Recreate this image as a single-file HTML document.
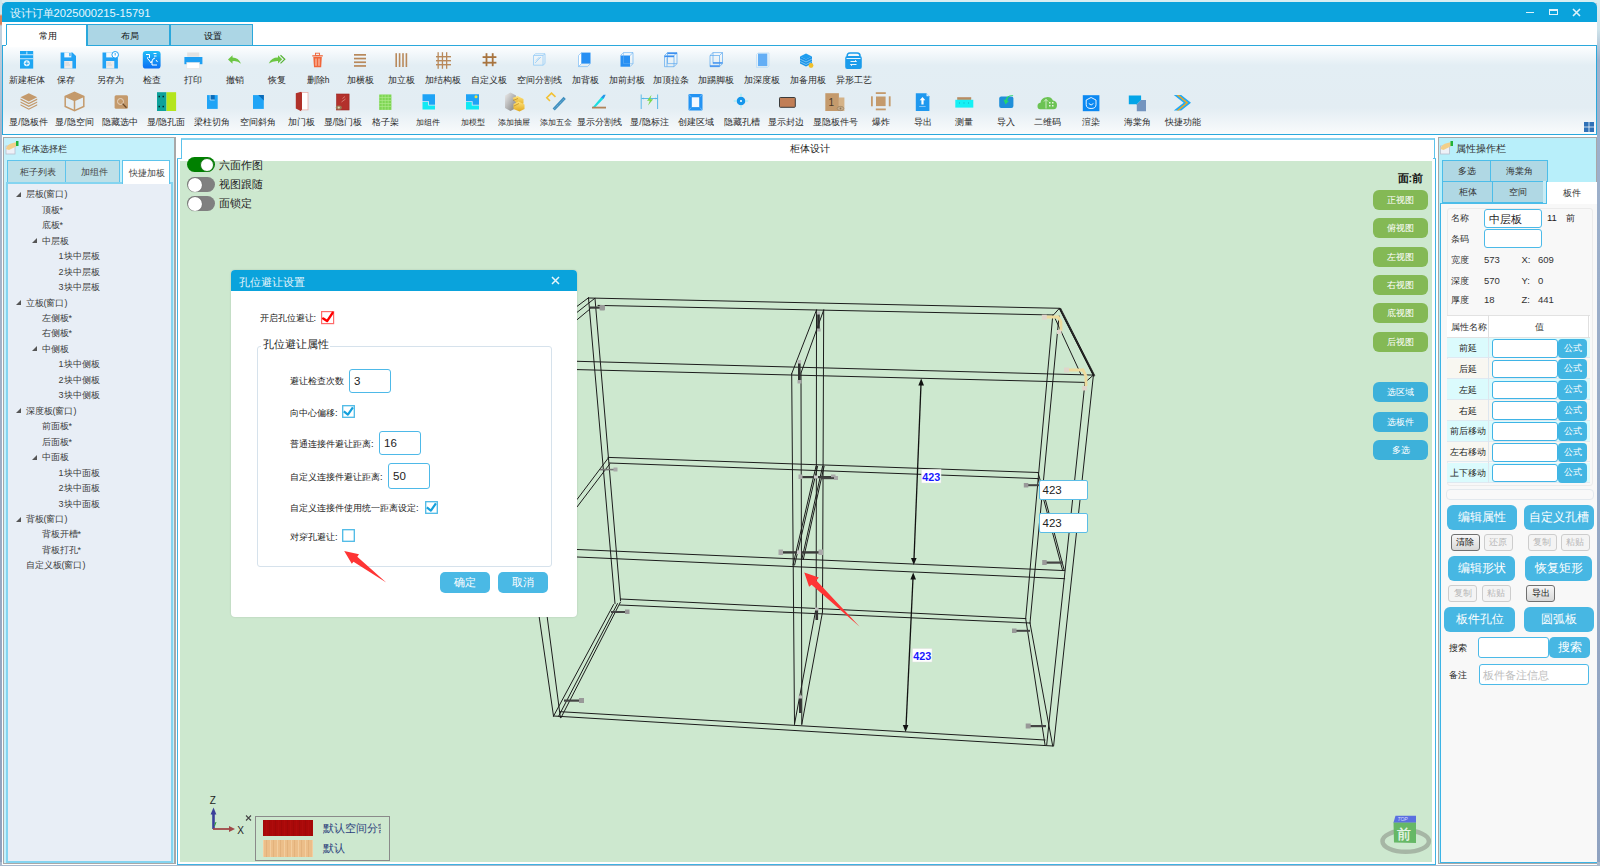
<!DOCTYPE html>
<html><head><meta charset="utf-8">
<style>
*{box-sizing:border-box;margin:0;padding:0}
html,body{width:1600px;height:866px;overflow:hidden;background:#b9c6d6;font-family:"Liberation Sans",sans-serif;color:#222}
.a{position:absolute}
.t{position:absolute;white-space:nowrap;line-height:10px}
.c{text-align:center}
.lb{position:absolute;width:70px;text-align:center;font-size:8.5px;line-height:10px;white-space:nowrap;color:#2a2a2a}
.ic{position:absolute}
.tree{position:absolute;font-size:9px;line-height:10px;color:#3c3c3c;white-space:nowrap}
.tri{position:absolute;width:0;height:0;border-left:5px solid transparent;border-bottom:5px solid #555}
.gbtn{position:absolute;left:1373px;width:55px;height:20px;border-radius:6px;background:#84b955;color:#fff;font-size:8.6px;line-height:20px;text-align:center}
.bbtn{position:absolute;left:1373px;width:55px;height:20px;border-radius:6px;background:#3db1da;color:#fff;font-size:8.6px;line-height:20px;text-align:center}
.pbtn{position:absolute;background:#47b6e2;color:#fff;border-radius:6px;font-size:12px;text-align:center;line-height:25px}
.sbtn{position:absolute;height:16px;border:1px solid #c9c9c9;border-radius:3px;background:#f4f4f4;color:#b5b5b5;font-size:9px;line-height:14px;text-align:center}
.sbtn.en{border-color:#6f6f6f;background:linear-gradient(#fafafa,#d9d9d9);color:#111}
.inp{position:absolute;background:#fff;border:1.5px solid #4bb6e6;border-radius:3px}
.row{position:absolute;left:1447px;width:143px;height:21px;border-bottom:1px solid #d8e6ef}
.rl{position:absolute;left:0;width:41px;height:20px;font-size:9px;line-height:20px;text-align:center;color:#222}
.fx{position:absolute;left:111px;top:0;width:29px;height:20px;background:#42b6e3;border-radius:4px;color:#fff;font-size:9px;line-height:20px;text-align:center}
.ri{position:absolute;left:44px;top:1px;width:66px;height:19px;background:#fff;border:1.5px solid #3fb3e4;border-radius:3px}
</style></head><body>
<!-- desktop strip -->
<div class="a" style="left:0;top:0;width:1600px;height:3px;background:#d8eef2"></div>
<div class="a" style="left:0;top:0;width:2px;height:866px;background:linear-gradient(#cfe6ec 0,#cfe6ec 14px,#d9825a 16px,#d9825a 24px,#c3d3e0 26px,#aab8cc 120px,#8fa0bc 100%)"></div>
<div class="a" style="left:1597px;top:0;width:3px;height:866px;background:linear-gradient(#d9eef2 0,#cfe3ea 30px,#9fb2cc 60px,#8fa2c0 100%)"></div>
<div class="a" style="left:0;top:862px;width:1600px;height:4px;background:#a9b9cc"></div>

<!-- window -->
<div class="a" style="left:2px;top:2px;width:1595px;height:863px;background:#fff;border-radius:5px 5px 0 0"></div>
<div class="a" style="left:2px;top:2px;width:1595px;height:20px;background:#0aa3dc;border-radius:5px 5px 0 0"></div>
<div class="t" style="left:9.5px;top:6.8px;font-size:11px;line-height:12px;color:#e8f6fc">设计订单<span style="font-size:11.2px">2025000215-15791</span></div>
<!-- window controls -->
<div class="a" style="left:1526px;top:12px;width:8px;height:1.3px;background:#dff3fb"></div>
<div class="a" style="left:1549px;top:9px;width:8.5px;height:6px;border:1.2px solid #dff3fb;border-top-width:2px"></div>
<svg class="a" style="left:1572px;top:8px" width="9" height="9"><path d="M1 1L8 8M8 1L1 8" stroke="#dff3fb" stroke-width="1.6"/></svg>

<!-- tabs -->
<div class="a" style="left:6px;top:24px;width:81px;height:23px;background:#fff;border:1px solid #2aa8dc;border-bottom:none"></div>
<div class="t c" style="left:7px;top:31px;width:81px;font-size:9.2px;color:#111">常用</div>
<div class="a" style="left:87px;top:24px;width:83px;height:22px;background:#acd6e5;border:1px solid #2aa8dc"></div>
<div class="t c" style="left:88px;top:31px;width:83px;font-size:9.2px;color:#111">布局</div>
<div class="a" style="left:170px;top:24px;width:83px;height:22px;background:#acd6e5;border:1px solid #2aa8dc"></div>
<div class="t c" style="left:171px;top:31px;width:83px;font-size:9.2px;color:#111">设置</div>

<!-- ribbon -->
<div class="a" style="left:2px;top:45px;width:1595px;height:90px;border:1px solid #2aa8dc;background:linear-gradient(#fdfeff 0%,#e3eef4 22%,#e3edf3 70%,#f9fbfc 100%)"></div>
<div class="a" style="left:6px;top:45px;width:80px;height:2px;background:#fff"></div>
<div class="lb" style="left:-8.5px;top:75px">新建柜体</div>
<div class="lb" style="left:31px;top:75px">保存</div>
<div class="lb" style="left:75px;top:75px">另存为</div>
<div class="lb" style="left:116.5px;top:75px">检查</div>
<div class="lb" style="left:158px;top:75px">打印</div>
<div class="lb" style="left:199.6px;top:75px">撤销</div>
<div class="lb" style="left:241.5px;top:75px">恢复</div>
<div class="lb" style="left:283px;top:75px">删除h</div>
<div class="lb" style="left:325px;top:75px">加横板</div>
<div class="lb" style="left:366.5px;top:75px">加立板</div>
<div class="lb" style="left:408px;top:75px">加结构板</div>
<div class="lb" style="left:454px;top:75px">自定义板</div>
<div class="lb" style="left:504px;top:75px">空间分割线</div>
<div class="lb" style="left:550px;top:75px">加背板</div>
<div class="lb" style="left:591.5px;top:75px">加前封板</div>
<div class="lb" style="left:635.5px;top:75px">加顶拉条</div>
<div class="lb" style="left:681px;top:75px">加踢脚板</div>
<div class="lb" style="left:727px;top:75px">加深度板</div>
<div class="lb" style="left:772.5px;top:75px">加备用板</div>
<div class="lb" style="left:818.5px;top:75px">异形工艺</div>
<div class="lb" style="left:-6.5px;top:117px">显/隐板件</div>
<div class="lb" style="left:39.5px;top:117px">显/隐空间</div>
<div class="lb" style="left:85px;top:117px">隐藏选中</div>
<div class="lb" style="left:131px;top:117px">显/隐孔面</div>
<div class="lb" style="left:176.75px;top:117px">梁柱切角</div>
<div class="lb" style="left:222.5px;top:117px">空间斜角</div>
<div class="lb" style="left:266.5px;top:117px">加门板</div>
<div class="lb" style="left:308px;top:117px">显/隐门板</div>
<div class="lb" style="left:350px;top:117px">格子架</div>
<div class="lb" style="left:393px;top:117.5px;font-size:7.6px">加组件</div>
<div class="lb" style="left:437.5px;top:117.5px;font-size:7.6px">加模型</div>
<div class="lb" style="left:479px;top:117.5px;font-size:7.6px">添加抽屉</div>
<div class="lb" style="left:520.5px;top:117.5px;font-size:7.6px">添加五金</div>
<div class="lb" style="left:564.5px;top:117px">显示分割线</div>
<div class="lb" style="left:614.5px;top:117px">显/隐标注</div>
<div class="lb" style="left:660.5px;top:117px">创建区域</div>
<div class="lb" style="left:706.5px;top:117px">隐藏孔槽</div>
<div class="lb" style="left:751px;top:117px">显示封边</div>
<div class="lb" style="left:800px;top:117px">显隐板件号</div>
<div class="lb" style="left:846px;top:117px">爆炸</div>
<div class="lb" style="left:887.5px;top:117px">导出</div>
<div class="lb" style="left:929px;top:117px">测量</div>
<div class="lb" style="left:971px;top:117px">导入</div>
<div class="lb" style="left:1012.5px;top:117px">二维码</div>
<div class="lb" style="left:1056px;top:117px">渲染</div>
<div class="lb" style="left:1102px;top:117px">海棠角</div>
<div class="lb" style="left:1148px;top:117px">快捷功能</div>
<svg class="a" style="left:0;top:45px" width="1600" height="90" viewBox="0 45 1600 90">
<defs>
<linearGradient id="gchk" x1="0" y1="0" x2="0" y2="1"><stop offset="0" stop-color="#22bdf7"/><stop offset="1" stop-color="#0a6ef4"/></linearGradient>
<linearGradient id="gcab" x1="0" y1="0" x2="1" y2="1"><stop offset="0" stop-color="#ededed"/><stop offset="1" stop-color="#7d7d7d"/></linearGradient>
<linearGradient id="gdr" x1="0" y1="0" x2="0" y2="1"><stop offset="0" stop-color="#ffe37a"/><stop offset="1" stop-color="#e0a81f"/></linearGradient>
</defs>
<!-- row1 -->
<rect x="20" y="51" width="13.2" height="17.6" fill="#1ea6f2"/>
<rect x="20" y="54.3" width="13.2" height="0.9" fill="#d9f1fd"/><rect x="20" y="58.3" width="13.2" height="0.9" fill="#d9f1fd"/>
<rect x="26.4" y="51.5" width="0.9" height="3" fill="#d9f1fd"/>
<circle cx="26.8" cy="63.3" r="3" fill="#e8f6fe"/><path d="M26.8 61.3V65.3M24.8 63.3H28.8" stroke="#1ea6f2" stroke-width="0.9"/>

<path d="M60.6 52.4H72.4L76 56V68.6H60.6Z" fill="#22a3f5"/><rect x="64.3" y="52.4" width="7" height="5" fill="#f3f8fb"/><rect x="69.3" y="53" width="1.3" height="3.2" fill="#22a3f5"/><rect x="64.2" y="61" width="8.2" height="7.6" fill="#ececec"/><path d="M65.3 63H69M65.3 65H70" stroke="#c6c6c6" stroke-width="0.6"/>
<path d="M102.5 52.4H114.3L117.9 56V68.6H102.5Z" fill="#22a3f5"/><rect x="106.2" y="52.4" width="7" height="5" fill="#f3f8fb"/><rect x="106.1" y="61" width="8.2" height="7.6" fill="#ececec"/><path d="M107.3 63H111M107.3 65H112" stroke="#c6c6c6" stroke-width="0.6"/>
<circle cx="115.2" cy="54.8" r="3.3" fill="#fff" stroke="#22a3f5" stroke-width="1"/><path d="M115.2 53V55.5" stroke="#22a3f5" stroke-width="0.9"/>

<rect x="142.8" y="51" width="17.8" height="17.6" rx="3.2" fill="url(#gchk)"/>
<path d="M146 54.5h3.5v3.5M148 57q-1.5 2 1 3l2 3 2-4 2 -1M153.5 53.5h3M154 56h2.5M152 61v4h5M156 60l1.5 2" stroke="#fff" stroke-width="1" fill="none"/>

<rect x="187.2" y="52.5" width="12" height="4.2" fill="#e2e2e2"/><rect x="184.4" y="57" width="18" height="7.2" fill="#1e9ff2"/><rect x="186.8" y="62.5" width="12.6" height="5.8" fill="#fff" stroke="#e4e4e4" stroke-width="0.6"/>

<path d="M228 59.5L232.5 55.2V57.6Q238.5 57.6 241 63.8Q237.6 60.5 232.5 61.2V63.8Z" fill="#6cc644"/>
<path d="M268.8 63.5Q271.5 57.5 278 57.6V55.2L282.2 59.3L278 63.5V61Q272.5 60.8 268.8 63.5Z" fill="#6cc644"/><path d="M280.5 55.2L284.8 59.3L280.5 63.4" fill="none" stroke="#57b337" stroke-width="1.2"/>

<rect x="312.3" y="55.2" width="10.5" height="1.3" fill="#f0663a"/><rect x="315.5" y="53.2" width="4" height="2.2" fill="none" stroke="#f0663a" stroke-width="0.9"/>
<path d="M313.3 57H321.8L321.2 67.2H314Z" fill="#f0663a"/><path d="M316 58.5V65.8M319 58.5V65.8" stroke="#fde0d4" stroke-width="0.9"/>

<g fill="#b8895b"><rect x="354" y="54" width="12" height="1.7"/><rect x="354" y="57.7" width="12" height="1.7"/><rect x="354" y="61.4" width="12" height="1.7"/><rect x="354" y="65.1" width="12" height="1.7"/></g>
<g fill="#b8895b"><rect x="395.4" y="53.2" width="1.6" height="13.8"/><rect x="398.8" y="53.2" width="1.6" height="13.8"/><rect x="402.2" y="53.2" width="1.6" height="13.8"/><rect x="405.6" y="53.2" width="1.6" height="13.8"/></g>
<g fill="#b8895b"><rect x="437.5" y="52.2" width="1.3" height="16.6"/><rect x="441.8" y="52.2" width="1.3" height="16.6"/><rect x="446" y="52.2" width="1.3" height="16.6"/><rect x="436" y="56" width="15" height="1.4"/><rect x="436" y="60" width="15" height="1.4"/><rect x="436" y="64" width="15" height="1.4"/></g>
<g fill="#a8743f"><rect x="485.6" y="53.2" width="1.8" height="13"/><rect x="491.8" y="53.2" width="1.8" height="13"/><rect x="482.6" y="56.2" width="13.8" height="1.8"/><rect x="482.6" y="61.8" width="13.8" height="1.8"/></g>

<g fill="none" stroke="#9fd0f6" stroke-width="0.9"><path d="M533.5 55.5L535.5 53.8H545V63.5L543 65.2H533.5Z"/><path d="M533.5 55.5H543V65.2M543 55.5L545 53.8M535 63L541 57M536 60.5L539.5 57"/></g>

<path d="M578.5 55.5L581.5 52.6V63.5L578.5 66.6Z" fill="#fff" stroke="#7bbcf5" stroke-width="0.7"/><rect x="581.5" y="52.6" width="9" height="11" fill="#268ff3"/><path d="M578.5 66.6H587.5L590.5 63.5" fill="none" stroke="#7bbcf5" stroke-width="0.7"/>
<rect x="620.5" y="55.5" width="9.5" height="11.2" fill="#268ff3"/><path d="M620.5 55.5L623.5 52.6H633V63.6L630 66.7M630 55.5L633 52.6" fill="none" stroke="#6fb4f3" stroke-width="0.7"/><path d="M623.5 52.6V63.6H633" fill="none" stroke="#6fb4f3" stroke-width="0.5"/>
<g fill="none" stroke="#5da9ef" stroke-width="0.7"><path d="M664.5 55.5H674V66.7H664.5ZM664.5 55.5L667.5 52.6H677V63.6L674 66.7M674 55.5L677 52.6M667.5 52.6V63.6H677M667 58V66.7"/></g><rect x="667.5" y="52.6" width="9.5" height="1.5" fill="#3d8ff0"/><rect x="664.5" y="56" width="9.5" height="1.2" fill="#3d8ff0"/>
<g fill="none" stroke="#5da9ef" stroke-width="0.7"><path d="M710 55.5H719.5V66.7H710ZM710 55.5L713 52.6H722.5V63.6L719.5 66.7M719.5 55.5L722.5 52.6M713 52.6V63.6H722.5"/></g><rect x="710" y="65.3" width="9.5" height="1.5" fill="#3d8ff0"/><rect x="713" y="62.2" width="9.5" height="1.2" fill="#3d8ff0"/>
<path d="M756.5 54.5L758 53H769V66L767.5 67.5H756.5Z" fill="none" stroke="#b9dcf8" stroke-width="0.7"/><rect x="758" y="53.6" width="9.3" height="12.5" fill="#63aef5"/>

<path d="M800 56.5L806 53.5L812 56.5L806 59.5Z" fill="#1e9ef0"/><path d="M800 56.5V63.5L806 66.5L812 63.5V56.5L806 59.5Z" fill="#1793e8"/><path d="M800 59L806 62L812 59M800 61.5L806 64.5L812 61.5" stroke="#b7e0fb" stroke-width="0.6" fill="none"/><circle cx="811" cy="65.5" r="2.4" fill="#f0c02c"/>
<path d="M847 56Q847 53.2 850 53.2H858Q861 53.2 861 56V68.5H846Z" fill="none"/><rect x="845.2" y="56" width="16.6" height="13" rx="2" fill="#1b9ceb"/><path d="M847.2 56.5Q847 53 850 53H857Q860.2 53 860 56.5" fill="none" stroke="#1b9ceb" stroke-width="1.6"/><path d="M850.5 61.5H856.5L855 60.2M856.5 64.5H850.5L852 65.8" fill="none" stroke="#fff" stroke-width="0.9"/><rect x="846.5" y="58" width="14" height="0.9" fill="#fff"/>

<!-- row2 -->
<g fill="#c49a6c"><path d="M20.5 97.3L28.8 93.2L37.2 97.3L28.8 101.5Z"/><path d="M20.5 98.6L28.8 102.8L37.2 98.6V100L28.8 104.2L20.5 100Z"/><path d="M20.5 101.4L28.8 105.6L37.2 101.4V102.8L28.8 107L20.5 102.8Z"/><path d="M20.5 104.2L28.8 108.4L37.2 104.2V105.6L28.8 109.8L20.5 105.6Z"/></g>
<g fill="none" stroke="#c49a6c" stroke-width="1.5"><path d="M65.2 96.4L74.5 92.4L83.8 96.4V106.4L74.5 110.6L65.2 106.4Z"/><path d="M65.2 96.4L74.5 100.5L83.8 96.4M74.5 100.5V110.6"/></g><path d="M65.2 96.4L74.5 92.4L83.8 96.4L74.5 100.5Z" fill="#c49a6c"/>
<rect x="114.6" y="95.2" width="13.4" height="13.6" rx="1.5" fill="#c49a6c"/><circle cx="120.5" cy="101.5" r="3" fill="none" stroke="#e8d6c2" stroke-width="1"/><path d="M122.6 103.6L126.5 107.8" stroke="#6b4a2a" stroke-width="1.3"/>
<rect x="157" y="92.2" width="9.5" height="18.8" fill="#0ea19b"/><rect x="166.5" y="92.2" width="9.6" height="18.8" fill="#b4e51c"/><g fill="#072b2a"><rect x="158.5" y="95.8" width="1.5" height="1.5"/><rect x="162.5" y="95.8" width="1.5" height="1.5"/><rect x="158.5" y="105.8" width="1.5" height="1.5"/><rect x="162.5" y="105.8" width="1.5" height="1.5"/></g>
<rect x="207" y="95.1" width="10.7" height="13.8" fill="#20a4f6"/><rect x="210.2" y="95.1" width="4.5" height="4.8" fill="#0c6bb8"/><path d="M210.2 95.1V100H214.7" fill="none" stroke="#d6ecfb" stroke-width="0.7"/>
<rect x="253" y="95.1" width="10.8" height="13.8" fill="#20a4f6"/><path d="M258.2 95.1H263.8V100.5Z" fill="#0c6bb8"/>
<rect x="300" y="92.4" width="8" height="17.5" fill="#fff" stroke="#e8a6a0" stroke-width="0.7"/><path d="M295.8 93.2L301.2 91.8V111.2L295.8 108.5Z" fill="#b0312a"/><rect x="300.8" y="92.4" width="1.2" height="17.5" fill="#b0312a"/>
<rect x="336.5" y="94" width="12.6" height="16" fill="#b3312c" stroke="#9b2622" stroke-width="0.6"/><path d="M342.5 98.5L345 96.5M341.5 102L345.5 99" stroke="#e59a8f" stroke-width="0.7"/><ellipse cx="338.8" cy="107.6" rx="3" ry="2.2" fill="#9a7b55"/><circle cx="338.8" cy="107.6" r="1.1" fill="#e2d4bc"/>
<rect x="379.2" y="94.5" width="12.2" height="15.4" fill="#7ed653"/><g stroke="#b3ec92" stroke-width="0.6"><path d="M379.2 97.5H391.4M379.2 100.5H391.4M379.2 103.5H391.4M379.2 106.5H391.4M382.2 94.5V110M385.2 94.5V110M388.2 94.5V110"/></g>
<path d="M422.5 94.2H435V104.8H429V101.2H422.5Z" fill="#1ea3f6"/><path d="M422.5 102H428.2V105.6H435V109.4H422.5Z" fill="#11e9f3"/>
<path d="M466 94.2H479V104.8H472.6V101.2H466Z" fill="#1ea3f6"/><path d="M466 102H471.8V105.6H479V109.4H466Z" fill="#11e9f3"/><circle cx="476" cy="96.8" r="1.5" fill="#f4e23a"/>
<path d="M505 95.5L510.5 92.4L516 95.5V108L510.5 111L505 108Z" fill="url(#gcab)"/><path d="M512.5 98L517.5 96L523.5 99V103.5L518.5 106Z" fill="url(#gdr)"/><path d="M513.5 104L518.5 101.5L524.5 104.5V109L519.5 111.5L513.5 109Z" fill="url(#gdr)"/><path d="M513 100.5L518 98.5M514 106L519 103.5" stroke="#b57b0d" stroke-width="0.6"/>
<path d="M550 101L546.8 97.8L551.5 93.2L555.5 96.8" fill="none" stroke="#f2c134" stroke-width="1.6"/><path d="M552.6 108.4L563.6 96.8L565.8 99L554.8 110.6Z" fill="#3f8fbf"/><path d="M554.6 108.6L564 98.8" stroke="#a6d2ea" stroke-width="0.6" stroke-dasharray="1 1"/>
<path d="M592.5 107.5L601 97.6L603.5 95.8L605.5 94.7L604.3 97.3L602.8 99.5L594.5 108" fill="#1bdfe1"/><path d="M601 97.5L603.5 94.7H605.6L603.6 98.8Z" fill="#2796ea"/><rect x="592" y="106.7" width="14" height="1.8" fill="#b18459"/>
<path d="M641.2 94.5V109M657.6 94.5V109M641.5 98.5H657.5" stroke="#4cb4e6" stroke-width="0.9"/><path d="M651.5 94.8L647 100.8H649.8L648 105.5L653.2 99.2H650.3Z" fill="#7ad84b"/><path d="M642 98.5L643.5 97.5V99.5ZM657 98.5L655.5 97.5V99.5Z" fill="#4cb4e6"/>
<rect x="688.5" y="94" width="14" height="16.4" rx="1.2" fill="#2393f3"/><rect x="691.8" y="97.3" width="7.4" height="9.8" fill="#f4f9ff"/><path d="M688.8 94.3L691 96.8M702.2 94.3L700 96.8M688.8 110.1L691 107.6M702.2 110.1L700 107.6" stroke="#83c4f8" stroke-width="0.8"/>
<circle cx="741" cy="101" r="4.3" fill="#1496ec"/><circle cx="741" cy="101" r="1" fill="#fff"/><path d="M741 93.8V96.3M741 105.7V108.2M733.8 101H736.3M745.7 101H748.2" stroke="#7ff0ff" stroke-width="0.9"/>
<rect x="779.5" y="97.5" width="15.8" height="9.8" rx="0.8" fill="#c17e56" stroke="#3b3b3b" stroke-width="1"/>
<rect x="825.3" y="93.2" width="13.6" height="17.8" fill="#c49a6c"/><rect x="838.9" y="97.5" width="5.5" height="13.5" fill="#d4b287"/><text x="828.5" y="105.6" font-size="10" font-family="Liberation Sans" fill="#4a3825">1</text><ellipse cx="840.5" cy="108.5" rx="3.3" ry="2.1" fill="#c9b08f" stroke="#8d7354" stroke-width="0.6"/><circle cx="840.5" cy="108.5" r="0.9" fill="#8d7354"/>
<g fill="#c49a6c"><rect x="876" y="96.5" width="9.6" height="9.6"/><rect x="875.8" y="92.2" width="10" height="1.8"/><rect x="875.8" y="108.5" width="10" height="1.8"/><rect x="871" y="96.3" width="1.8" height="10"/><rect x="888.8" y="96.3" width="1.8" height="10"/></g>
<path d="M915.8 93.3H926.5L929.4 96.2V111H915.8Z" fill="#1f98ef"/><path d="M926.5 93.3V96.2H929.4Z" fill="#d8ecfc"/><path d="M922.5 97L925.3 100.2H923.6V104.5H921.4V100.2H919.7Z" fill="#fff"/><rect x="919.2" y="106.2" width="6.4" height="0.8" fill="#9fd0f8"/>
<rect x="957.2" y="97.2" width="14" height="2.7" fill="#b88c63"/><rect x="955.3" y="99.8" width="18" height="7.8" fill="#15f1f5"/><path d="M959.5 102V104M964 102V104M968.5 102V104" stroke="#13b8c6" stroke-width="0.6"/>
<rect x="999.2" y="96.5" width="14.2" height="11.5" rx="2" fill="#1f8fd9"/><path d="M1012.8 96.2Q1008.5 95.5 1007 100.5L1008.8 101L1005.5 104.5L1003.5 99.5L1005.4 100Q1006.5 94.8 1013.3 95.2Z" fill="#25d86a"/>
<path d="M1040 109.2Q1037.5 109.2 1037.5 106Q1037.5 103 1040.5 102.8Q1041 97.8 1046.5 97.2Q1051 96.6 1053 100.5Q1057 101 1057 105Q1057 109.2 1053.5 109.2Z" fill="#6cc354"/><path d="M1046 99.5V108.5M1044 101.5L1046 99.3L1048 101.5" stroke="#e5f5df" stroke-width="0.8" fill="none"/><g fill="#e5f5df"><rect x="1049" y="102" width="1.5" height="1.5"/><rect x="1052" y="102" width="1.5" height="1.5"/><rect x="1049" y="105" width="1.5" height="1.5"/><rect x="1052" y="105" width="1.5" height="1.5"/></g>
<rect x="1082.8" y="95.2" width="16.6" height="16" fill="#0b88f2"/><path d="M1091.1 97.5L1096 100V104.5Q1096 108.5 1091.1 108.5Q1086.2 108.5 1086.2 104.5V100Z" fill="none" stroke="#fff" stroke-width="0.9"/><path d="M1088.8 103.5Q1091.1 106.5 1093.4 103.5" fill="none" stroke="#fff" stroke-width="0.9"/>
<path d="M1136.8 104.2L1141 100H1146V111.2H1136.8Z" fill="#7394bf"/><path d="M1128.8 95.4H1141.1V100L1136.8 104.2H1128.8Z" fill="#03a5e8"/>
<path d="M1173.8 95H1181.2L1191 102.8L1181.2 110.6H1173.8L1183.6 102.8Z" fill="#22a9f5"/><path d="M1176.6 95H1178.8L1188.3 102.8L1178.8 110.6H1176.6L1186.1 102.8Z" fill="#f4a81c"/>
<!-- grid icon -->
<g fill="#2f72b8"><rect x="1584" y="122" width="4.6" height="4.6"/><rect x="1589.4" y="122" width="4.6" height="4.6"/><rect x="1584" y="127.4" width="4.6" height="4.6"/><rect x="1589.4" y="127.4" width="4.6" height="4.6"/></g>
</svg>

<!-- left panel -->
<div class="a" style="left:3px;top:137px;width:173px;height:727px;background:#c4f1fb;border:1px solid #a8a8a8;border-right:2px solid #a8a8a8"></div>
<svg class="a" style="left:5px;top:140px" width="14" height="15"><rect x="1" y="6" width="9" height="8" fill="#eef1f8" stroke="#b9bfcc" stroke-width="0.8"/><path d="M1 9 Q2 4 8 3 L12 2 L12 6 Q8 8 4 10 Z" fill="#f2cf8a"/><rect x="11" y="1" width="2.5" height="5" fill="#1fb33a"/></svg>
<div class="t" style="left:22px;top:143.5px;font-size:9.3px;color:#333">柜体选择栏</div>
<div class="a" style="left:7px;top:160px;width:59px;height:23px;background:#bde0e8;border:1.5px solid #5ec4ec"></div>
<div class="a" style="left:65px;top:160px;width:55px;height:23px;background:#bde0e8;border:1.5px solid #5ec4ec"></div>
<div class="a" style="left:6px;top:182px;width:167px;height:681px;background:#e8eef6;border:2px solid #84d4f0"></div>
<div class="a" style="left:122px;top:160px;width:48px;height:24px;background:#fff;border:1.5px solid #5ec4ec;border-bottom:none"></div>
<div class="t c" style="left:8.5px;top:167px;width:59px;font-size:9.2px;color:#444">柜子列表</div>
<div class="t c" style="left:66.5px;top:167px;width:55px;font-size:9.2px;color:#444">加组件</div>
<div class="t c" style="left:123px;top:168px;width:48px;font-size:8.8px;color:#444">快捷加板</div>
<div class="tri" style="left:15.5px;top:191.8px"></div>
<div class="tree" style="left:25.5px;top:189.3px">层板(窗口)</div>
<div class="tree" style="left:41.5px;top:204.8px">顶板*</div>
<div class="tree" style="left:41.5px;top:220.2px">底板*</div>
<div class="tri" style="left:31.5px;top:238.2px"></div>
<div class="tree" style="left:41.5px;top:235.7px">中层板</div>
<div class="tree" style="left:58.5px;top:251.1px">1块中层板</div>
<div class="tree" style="left:58.5px;top:266.6px">2块中层板</div>
<div class="tree" style="left:58.5px;top:282.1px">3块中层板</div>
<div class="tri" style="left:15.5px;top:300.0px"></div>
<div class="tree" style="left:25.5px;top:297.5px">立板(窗口)</div>
<div class="tree" style="left:41.5px;top:313.0px">左侧板*</div>
<div class="tree" style="left:41.5px;top:328.4px">右侧板*</div>
<div class="tri" style="left:31.5px;top:346.4px"></div>
<div class="tree" style="left:41.5px;top:343.9px">中侧板</div>
<div class="tree" style="left:58.5px;top:359.4px">1块中侧板</div>
<div class="tree" style="left:58.5px;top:374.8px">2块中侧板</div>
<div class="tree" style="left:58.5px;top:390.3px">3块中侧板</div>
<div class="tri" style="left:15.5px;top:408.2px"></div>
<div class="tree" style="left:25.5px;top:405.7px">深度板(窗口)</div>
<div class="tree" style="left:41.5px;top:421.2px">前面板*</div>
<div class="tree" style="left:41.5px;top:436.7px">后面板*</div>
<div class="tri" style="left:31.5px;top:454.6px"></div>
<div class="tree" style="left:41.5px;top:452.1px">中面板</div>
<div class="tree" style="left:58.5px;top:467.6px">1块中面板</div>
<div class="tree" style="left:58.5px;top:483.0px">2块中面板</div>
<div class="tree" style="left:58.5px;top:498.5px">3块中面板</div>
<div class="tri" style="left:15.5px;top:516.5px"></div>
<div class="tree" style="left:25.5px;top:514.0px">背板(窗口)</div>
<div class="tree" style="left:41.5px;top:529.4px">背板开槽*</div>
<div class="tree" style="left:41.5px;top:544.9px">背板打孔*</div>
<div class="tree" style="left:25.5px;top:560.3px">自定义板(窗口)</div>

<!-- center -->
<div class="a" style="left:180.5px;top:138px;width:1254px;height:21px;background:#fff;border:1.5px solid #5cc2ec;border-bottom:none;border-top:2px solid #86d3f0"></div>
<div class="t c" style="left:182.5px;top:143.5px;width:1254px;font-size:9.5px;color:#222">柜体设计</div>
<div class="a" style="left:177px;top:158px;width:1259px;height:707px;background:#fff;border:1.5px solid #3fb2e3;border-bottom-width:1.5px;border-top:none"></div>
<div class="a" style="left:180px;top:161px;width:1252px;height:700.5px;background:#cde8cf"></div>
<div class="a" style="left:177px;top:157.5px;width:5px;height:1.5px;background:#5cc2ec"></div><div class="a" style="left:1433px;top:157.5px;width:3px;height:1.5px;background:#5cc2ec"></div>
<div class="a" style="left:187px;top:157px;width:28px;height:15px;border-radius:8px;background:#008000"></div><div class="a" style="left:200px;top:157.5px;width:14px;height:14px;border-radius:7px;background:#fff;border:1px solid #1a7a1a"></div><div class="t" style="left:219px;top:158.7px;font-size:11px;line-height:12px;color:#222">六面作图</div>
<div class="a" style="left:187px;top:177px;width:28px;height:15px;border-radius:8px;background:#808080"></div><div class="a" style="left:187.5px;top:177.5px;width:14px;height:14px;border-radius:7px;background:#fff;box-shadow:0 0 1px #444"></div><div class="t" style="left:219px;top:178.3px;font-size:11px;line-height:12px;color:#222">视图跟随</div>
<div class="a" style="left:187px;top:196px;width:28px;height:15px;border-radius:8px;background:#808080"></div><div class="a" style="left:187.5px;top:196.5px;width:14px;height:14px;border-radius:7px;background:#fff;box-shadow:0 0 1px #444"></div><div class="t" style="left:219px;top:197.3px;font-size:11px;line-height:12px;color:#222">面锁定</div>
<div class="t" style="left:1397.5px;top:171.5px;font-size:10.8px;line-height:12px;font-weight:bold;color:#111">面:前</div>
<div class="gbtn" style="top:190px">正视图</div>
<div class="gbtn" style="top:218.3px">俯视图</div>
<div class="gbtn" style="top:246.6px">左视图</div>
<div class="gbtn" style="top:275px">右视图</div>
<div class="gbtn" style="top:303.3px">底视图</div>
<div class="gbtn" style="top:331.7px">后视图</div>
<div class="bbtn" style="top:381.8px">选区域</div>
<div class="bbtn" style="top:411.8px">选板件</div>
<div class="bbtn" style="top:439.8px">多选</div>
<svg class="a" style="left:200px;top:790px" width="60" height="50" viewBox="200 790 60 50">
<text x="209.8" y="804.3" font-size="10" font-family="Liberation Sans" fill="#222">Z</text>
<path d="M213.5 829V813" stroke="#3b3f9a" stroke-width="2.6"/><path d="M210.6 814.5L213.5 807.5L216.4 814.5Z" fill="#3b3f9a"/>
<path d="M213 829H230" stroke="#a04848" stroke-width="1.8"/><path d="M229 826L235 829L229 832Z" fill="#a04848"/>
<path d="M214.5 826L216 822" stroke="#2a9a3a" stroke-width="1"/>
<text x="237.3" y="833.8" font-size="10" font-family="Liberation Sans" fill="#222">X</text>
<path d="M246 815.5L251 820.5M251 815.5L246 820.5" stroke="#444" stroke-width="1.1"/>
</svg>
<div class="a" style="left:255px;top:816px;width:135px;height:45px;border:1px solid #8a8a8a"></div>
<div class="a" style="left:262.5px;top:819.5px;width:50px;height:16.5px;background:#aa0909;background-image:repeating-linear-gradient(90deg,rgba(0,0,0,0.06) 0 1px,transparent 1px 3px,rgba(255,60,60,0.06) 3px 4px,transparent 4px 6px)"></div>
<div class="a" style="left:262.5px;top:840px;width:50px;height:17px;background:#ecbe89;background-image:repeating-linear-gradient(90deg,rgba(255,235,200,0.35) 0 1px,transparent 1px 3px,rgba(160,90,30,0.12) 3px 4px,transparent 4px 7px)"></div>
<div class="t" style="left:322.5px;top:822px;font-size:10.5px;line-height:12px;color:#2c3e7c;width:58px;overflow:hidden">默认空间分割</div>
<div class="t" style="left:322.5px;top:842px;font-size:10.5px;line-height:12px;color:#2c3e7c">默认</div>
<svg class="a" style="left:1370px;top:800px" width="70" height="62" viewBox="1370 800 70 62">
<ellipse cx="1405.7" cy="841.2" rx="23.2" ry="10.6" fill="none" stroke="#a6b6a5" stroke-width="4.5"/>
<path d="M1393.5 822.2L1416 822.2L1416 843L1394 842.5Z" fill="#66b866"/>
<path d="M1393.5 822.5L1395.5 815.8H1416V822.5Z" fill="#5b6fe0"/>
<text x="1397.5" y="820.8" font-size="5" font-family="Liberation Sans" fill="#d8ddff" font-style="italic">TOP</text>
<text x="1396.8" y="838.6" font-size="14" font-family="Liberation Sans" fill="#eef8ee" stroke="#eef8ee" stroke-width="0.25">前</text>
</svg>
<svg class="a" style="left:180px;top:161px" width="1253" height="700" viewBox="180 161 1253 700">
<g stroke="#1c1c1c" stroke-width="1" fill="none" stroke-linecap="round">
<path d="M588.5 298L1059.4 308.3"/>
<path d="M598 305.4L1053.4 315"/>
<path d="M1053.4 315L1059.4 308.3"/>
<path d="M588.6 297.7L577 306.4"/>
<path d="M594.8 298.3L577 312.4"/>
<path d="M590.1 308.9L577 319.8"/>
<path d="M588.5 298L615 603.6"/>
<path d="M595 298.5L620.5 600.6"/>
<path d="M577 361.3L1093.4 375.1"/>
<path d="M577 369.6L1085 382.4"/>
<path d="M1085 382.4L1093.4 375.1"/>
<path d="M1059.4 308.3L1093.4 375.1"/>
<path d="M1060.6 308.3L1094.6 375.3"/><path d="M1060.1 308.8L1094.1 375.8"/><path d="M1059.6 309.2L1093.6 376.2"/>
<path d="M1055.2 318.7L1080.7 373.9"/>
<path d="M1052.8 315L1025.7 618.6"/>
<path d="M1059 316L1030 623"/>
<path d="M1093.4 375.1L1053.6 746"/>
<path d="M1085 382.4L1046.7 744.7"/>
<path d="M816.5 310L816.2 608.6"/>
<path d="M823.7 310L822.5 612"/>
<path d="M816.5 310L791.7 373.7"/>
<path d="M823.7 310L801 373"/>
<path d="M791.7 373.7L794.5 724.3"/>
<path d="M801 373L801.8 724.3"/>
<path d="M816 466.3L793 565"/>
<path d="M817.6 466.3L794.6 565"/>
<path d="M822.6 466.3L801.8 559.5"/>
<path d="M824.1 466.3L803.3 559.5"/>
<path d="M816 608.6L794.5 724.3"/>
<path d="M822.5 612L801.8 724.3"/>
<path d="M608 457.4L1038.1 472.5"/>
<path d="M609.3 463L1038.1 478.6"/>
<path d="M608.3 458L577 499.5"/>
<path d="M609.7 464L577 507"/>
<path d="M1038.1 472.5L1064.1 569.6"/>
<path d="M1038.1 478.6L1062.5 570"/>
<path d="M577 549.5L1064.7 570.6"/>
<path d="M577 557L1064.7 578.7"/>
<path d="M620.5 599L1025.7 618.6"/>
<path d="M619.6 605L1030 623"/>
<path d="M613.6 604.5L553.5 716.2"/>
<path d="M617.5 603.6L558.6 716.2"/>
<path d="M620.5 602L561 717.7"/>
<path d="M539.2 617L553.5 716"/>
<path d="M547.2 617L560.4 717.7"/>
<path d="M553.5 716L1052.7 746"/>
<path d="M560.4 711.7L1045 740"/>
<path d="M1025.7 618.6L1045 744.7"/>
<path d="M1030 623L1052.7 746"/>
</g>

<g>
<rect x="590" y="306.5" width="10" height="2.2" fill="#3a3a3a"/><rect x="599.5" y="305" width="5.5" height="5.5" rx="1" fill="#9a9a9a"/>
<rect x="817.2" y="314" width="2.6" height="15" fill="#2f2f2f"/><rect x="816.8" y="311.5" width="3.4" height="3" fill="#bbb"/><rect x="817" y="328.5" width="3.6" height="3" fill="#aaa"/>
<rect x="798" y="363" width="2.6" height="17" fill="#2f2f2f"/><rect x="797.5" y="360" width="3.6" height="3.5" fill="#bbb"/><rect x="797.5" y="380" width="4" height="3.5" fill="#aaa"/>
<rect x="800" y="476" width="34" height="2.2" fill="#3a3a3a"/><rect x="798.5" y="474.5" width="4" height="4.5" fill="#aaa"/><rect x="831" y="474.5" width="4.5" height="4.5" fill="#aaa"/><rect x="814" y="475.5" width="4" height="3" fill="#ccc"/>
<rect x="780" y="551.2" width="42" height="2.4" fill="#3a3a3a"/><rect x="778.5" y="549.5" width="4.5" height="5.5" fill="#aaa"/><rect x="818.5" y="549.5" width="4.5" height="5.5" fill="#aaa"/><rect x="797" y="550.5" width="4" height="3.5" fill="#ccc"/>
<rect x="600" y="468.8" width="16" height="1.6" fill="#777"/><rect x="613.5" y="467.5" width="4" height="4" fill="#aaa"/>
<rect x="611" y="611" width="15" height="2" fill="#444"/><rect x="625" y="609.5" width="4.5" height="4.5" fill="#999"/>
<rect x="564" y="699.5" width="16" height="2.2" fill="#444"/><rect x="579" y="698" width="5" height="5" fill="#999"/>
<rect x="1028" y="484.2" width="11" height="2" fill="#444"/><rect x="1023.8" y="483" width="4.5" height="4.5" fill="#999"/>
<rect x="821" y="477.2" width="14" height="2" fill="#444"/><rect x="834" y="476" width="4" height="4" fill="#aaa"/>
<rect x="1045" y="561.5" width="18" height="2.2" fill="#444"/><rect x="1042.2" y="560" width="4.5" height="5" fill="#999"/>
<rect x="1016" y="629.8" width="14" height="2" fill="#444"/><rect x="1012" y="628.5" width="4.5" height="4.5" fill="#999"/>
<rect x="1030" y="725" width="16" height="2.2" fill="#444"/><rect x="1025.7" y="723.5" width="5" height="5" fill="#999"/>
<rect x="815.5" y="610" width="2.6" height="10" fill="#333"/><rect x="815" y="607.5" width="3.6" height="3" fill="#bbb"/>
<rect x="799" y="698" width="2.6" height="15" fill="#333"/><rect x="798.5" y="695.5" width="3.6" height="3" fill="#bbb"/>
<path d="M1046 317H1058L1061 322V331" fill="none" stroke="#eedb9e" stroke-width="2.8"/><rect x="1041.8" y="314.7" width="5" height="5" fill="#e0d6cc"/><rect x="1057" y="330" width="4.5" height="4" fill="#e0d6cc"/>
<path d="M1068 370H1083L1086 376V386" fill="none" stroke="#eedb9e" stroke-width="2.8"/><rect x="1064" y="367.5" width="5" height="5" fill="#e0d6cc"/><rect x="1082" y="386" width="5" height="4.5" fill="#e0d6cc"/>
</g>
<g stroke="#111" stroke-width="1.3" fill="#111">
<path d="M921 384L914 559" fill="none"/><path d="M921.2 378.5L918.3 385.5H924Z" stroke="none"/><path d="M913.8 565L911 558H916.6Z" stroke="none"/>
<path d="M913 578L906 727" fill="none"/><path d="M913.2 572.5L910.4 579.5H916Z" stroke="none"/><path d="M905.6 732L902.8 725H908.4Z" stroke="none"/>
</g>
<rect x="921.5" y="469.5" width="19.5" height="13.5" fill="#fff" stroke="#ddd" stroke-width="0.5"/><text x="922.3" y="480.6" font-size="10.8" font-weight="bold" font-family="Liberation Sans" fill="#1a1aff">423</text>
<rect x="912.5" y="648.5" width="19.5" height="13.5" fill="#fff" stroke="#ddd" stroke-width="0.5"/><text x="913.3" y="659.6" font-size="10.8" font-weight="bold" font-family="Liberation Sans" fill="#1a1aff">423</text>
<path d="M804.3 572.5L818.8 577.4L816.4 580.6L859.7 626.7L811.6 584.7L809.1 586.7Z" fill="#fe3434"/>
</svg>
<div class="a" style="left:1038.5px;top:479.5px;width:49.5px;height:20px;background:#fff;border:1.5px solid #5bbde6;border-radius:2px"></div>
<div class="t" style="left:1042.5px;top:483.5px;font-size:11.5px;line-height:12px;color:#222">423</div>
<div class="a" style="left:1038.5px;top:513px;width:49.5px;height:19.5px;background:#fff;border:1.5px solid #5bbde6;border-radius:2px"></div>
<div class="t" style="left:1042.5px;top:517px;font-size:11.5px;line-height:12px;color:#222">423</div>
<div class="a" style="left:230.5px;top:270px;width:346.5px;height:346.5px;background:#fff;border-radius:4px;box-shadow:0 0 2px rgba(0,0,0,0.15)"></div>
<div class="a" style="left:230.5px;top:270px;width:346.5px;height:20.5px;background:#0aa3dc;border-radius:4px 4px 0 0"></div>
<div class="t" style="left:239px;top:275.5px;font-size:11px;line-height:12px;color:#e6f5fb">孔位避让设置</div>
<svg class="a" style="left:551px;top:276px" width="9" height="9"><path d="M1 1L8 8M8 1L1 8" stroke="#e6f5fb" stroke-width="1.5"/></svg>
<div class="t" style="left:259.5px;top:313px;font-size:9.2px;color:#222">开启孔位避让:</div>
<svg class="a" style="left:321px;top:311px" width="14" height="14"><rect x="0.6" y="0.6" width="12" height="12" fill="#fff" stroke="#ff6b6b" stroke-width="1.2"/><path d="M2.2 7.4L6.1 10.1L11.6 1.8" fill="none" stroke="#ff0000" stroke-width="2.4" stroke-linecap="round" stroke-linejoin="round"/></svg>
<div class="a" style="left:257px;top:345.5px;width:294.5px;height:221px;border:1px solid #d6e2ec;border-radius:3px"></div>
<div class="a" style="left:261px;top:340px;width:69px;height:10px;background:#fff"></div>
<div class="t" style="left:263px;top:338px;font-size:11.2px;line-height:12px;color:#222">孔位避让属性</div>
<div class="t" style="left:290px;top:376px;font-size:9.3px;color:#222">避让检查次数</div>
<div class="a" style="left:349px;top:368.5px;width:41.5px;height:24.5px;border:1.5px solid #4eb9e8;border-radius:3px;background:#fff"></div><div class="t" style="left:354px;top:375.0px;font-size:11.5px;line-height:12px;color:#222">3</div>
<div class="t" style="left:290px;top:407.5px;font-size:9.3px;color:#222">向中心偏移:</div>
<svg class="a" style="left:341.7px;top:404.9px" width="14" height="14"><rect x="0.7" y="0.7" width="11.6" height="11.6" fill="#fff" stroke="#4cb9e6" stroke-width="1.3"/><path d="M1.8 6.4L5.9 9.6L10.9 2.3" fill="none" stroke="#14a0dc" stroke-width="2.2" stroke-linejoin="round"/></svg>
<div class="t" style="left:290px;top:438.5px;font-size:9.3px;color:#222">普通连接件避让距离:</div>
<div class="a" style="left:379px;top:430.5px;width:41.5px;height:24.5px;border:1.5px solid #4eb9e8;border-radius:3px;background:#fff"></div><div class="t" style="left:384px;top:437.0px;font-size:11.5px;line-height:12px;color:#222">16</div>
<div class="t" style="left:290px;top:472px;font-size:9.3px;color:#222">自定义连接件避让距离:</div>
<div class="a" style="left:388px;top:463px;width:42px;height:25.5px;border:1.5px solid #4eb9e8;border-radius:3px;background:#fff"></div><div class="t" style="left:393px;top:469.5px;font-size:11.5px;line-height:12px;color:#222">50</div>
<div class="t" style="left:290px;top:502.5px;font-size:9.3px;color:#222">自定义连接件使用统一距离设定:</div>
<svg class="a" style="left:424.7px;top:500.9px" width="14" height="14"><rect x="0.7" y="0.7" width="11.6" height="11.6" fill="#fff" stroke="#4cb9e6" stroke-width="1.3"/><path d="M1.8 6.4L5.9 9.6L10.9 2.3" fill="none" stroke="#14a0dc" stroke-width="2.2" stroke-linejoin="round"/></svg>
<div class="t" style="left:290px;top:531.5px;font-size:9.3px;color:#222">对穿孔避让:</div>
<svg class="a" style="left:341.7px;top:528.9px" width="14" height="14"><rect x="0.7" y="0.7" width="11.6" height="11.6" fill="#fff" stroke="#4cb9e6" stroke-width="1.3"/></svg>
<div class="a" style="left:440px;top:572px;width:50px;height:21px;border-radius:5px;background:#4ab9e5;color:#fff;font-size:11px;line-height:21px;text-align:center">确定</div>
<div class="a" style="left:498px;top:572px;width:50px;height:21px;border-radius:5px;background:#4ab9e5;color:#fff;font-size:11px;line-height:21px;text-align:center">取消</div>
<svg class="a" style="left:340px;top:546px" width="50" height="40" viewBox="340 546 50 40"><path d="M344.2 551L359 554.2L357.3 556.8L386.2 582.5L353.5 561.7L351.8 563.7Z" fill="#fe3434"/></svg>

<!-- right panel -->
<div class="a" style="left:1438px;top:137px;width:159px;height:727px;background:#b8effa;border:1px solid #a8a8a8"></div>
<svg class="a" style="left:1440px;top:140px" width="14" height="15"><rect x="0.5" y="6" width="9" height="8" fill="#eef1f8" stroke="#b9bfcc" stroke-width="0.8"/><path d="M0.5 9 Q1.5 4 7.5 3 L11.5 2 L11.5 6 Q7.5 8 3.5 10 Z" fill="#f2cf8a"/><rect x="10.5" y="1" width="2.5" height="5" fill="#1fb33a"/></svg>
<div class="t" style="left:1456px;top:143.5px;font-size:9.5px;color:#333">属性操作栏</div>
<div class="a" style="left:1442px;top:160px;width:49px;height:22px;background:#b0d8e4;border:1.5px solid #4cbde9"></div>
<div class="a" style="left:1490px;top:160px;width:58px;height:22px;background:#b0d8e4;border:1.5px solid #4cbde9"></div>
<div class="a" style="left:1442px;top:181px;width:51px;height:22px;background:#b0d8e4;border:1.5px solid #4cbde9"></div>
<div class="a" style="left:1492px;top:181px;width:52px;height:22px;background:#b0d8e4;border:1.5px solid #4cbde9"></div>
<div class="a" style="left:1543px;top:181px;width:4px;height:22px;background:#c7ecf5;border-right:1.5px solid #4cbde9"></div>
<div class="a" style="left:1547px;top:181.5px;width:50px;height:23px;background:#fff"></div>
<div class="t c" style="left:1442px;top:166px;width:49px;font-size:9px;color:#333">多选</div>
<div class="t c" style="left:1490px;top:166px;width:58px;font-size:9px;color:#333">海棠角</div>
<div class="t c" style="left:1442px;top:187px;width:51px;font-size:9px;color:#333">柜体</div>
<div class="t c" style="left:1492px;top:187px;width:52px;font-size:9px;color:#333">空间</div>
<div class="t c" style="left:1547px;top:188px;width:50px;font-size:9px;color:#333">板件</div>
<div class="a" style="left:1439.5px;top:202.5px;width:157.5px;height:660.5px;background:#f8f8f8;border-left:1.5px solid #3cb4e6;border-bottom:1.5px solid #3cb4e6;border-top:1.5px solid #4cbde9"></div>
<div class="a" style="left:1546.5px;top:202px;width:50px;height:2px;background:#fff"></div>
<div class="a" style="left:1446.5px;top:208px;width:146px;height:278px;border:1px solid #ebebeb;border-radius:3px"></div>
<div class="t" style="left:1451px;top:213px;font-size:9px;color:#333">名称</div>
<div class="a" style="left:1484px;top:208.8px;width:58px;height:19px;background:#fff;border:1.5px solid #4cbae8;border-radius:3px"></div>
<div class="t" style="left:1488.5px;top:212.5px;font-size:11px;line-height:12px;color:#222">中层板</div>
<div class="t" style="left:1547px;top:213px;font-size:9.5px;color:#222">11</div>
<div class="t" style="left:1566px;top:213px;font-size:9px;color:#222">前</div>
<div class="t" style="left:1451px;top:234px;font-size:9px;color:#333">条码</div>
<div class="a" style="left:1484px;top:229px;width:58px;height:19px;background:#fff;border:1.5px solid #4cbae8;border-radius:3px"></div>
<div class="t" style="left:1451px;top:255px;font-size:9px;color:#333">宽度</div>
<div class="t" style="left:1484px;top:255px;font-size:9.5px;color:#333">573</div>
<div class="t" style="left:1521.5px;top:255px;font-size:9.5px;color:#333">X:</div>
<div class="t" style="left:1538px;top:255px;font-size:9.5px;color:#333">609</div>
<div class="t" style="left:1451px;top:275.5px;font-size:9px;color:#333">深度</div>
<div class="t" style="left:1484px;top:275.5px;font-size:9.5px;color:#333">570</div>
<div class="t" style="left:1521.5px;top:275.5px;font-size:9.5px;color:#333">Y:</div>
<div class="t" style="left:1538px;top:275.5px;font-size:9.5px;color:#333">0</div>
<div class="t" style="left:1451px;top:295px;font-size:9px;color:#333">厚度</div>
<div class="t" style="left:1484px;top:295px;font-size:9.5px;color:#333">18</div>
<div class="t" style="left:1521.5px;top:295px;font-size:9.5px;color:#333">Z:</div>
<div class="t" style="left:1538px;top:295px;font-size:9.5px;color:#333">441</div>
<div class="a" style="left:1447px;top:315px;width:143px;height:23px;background:#fff;border-top:1px solid #e2e2e2;border-bottom:1px solid #e2e2e2"></div>
<div class="a" style="left:1488px;top:315px;width:1px;height:168px;background:#e0e0e0"></div>
<div class="a" style="left:1588px;top:315px;width:1px;height:23px;background:#e0e0e0"></div>
<div class="t" style="left:1451px;top:322px;font-size:9px;color:#333">属性名称</div>
<div class="t" style="left:1535px;top:322px;font-size:9px;color:#333">值</div>
<div class="a" style="left:1447px;top:337.7px;width:143px;height:20.8px;background:#dbfbfd;border-bottom:1px solid #dfe9f1"></div>
<div class="a" style="left:1488px;top:337.7px;width:1px;height:20.8px;background:#dde6ee"></div>
<div class="t c" style="left:1447px;top:343.2px;width:41px;font-size:9px;color:#222">前延</div>
<div class="a" style="left:1491.5px;top:339.0px;width:66px;height:18.5px;background:#fff;border:1.5px solid #3fb4e6;border-radius:3px"></div>
<div class="a" style="left:1558.3px;top:338.6px;width:28.5px;height:19.5px;background:#42b6e3;border-radius:4px;color:#fff;font-size:9px;line-height:19.5px;text-align:center">公式</div>
<div class="a" style="left:1447px;top:358.5px;width:143px;height:20.8px;background:#f8f7f1;border-bottom:1px solid #dfe9f1"></div>
<div class="a" style="left:1488px;top:358.5px;width:1px;height:20.8px;background:#dde6ee"></div>
<div class="t c" style="left:1447px;top:364.0px;width:41px;font-size:9px;color:#222">后延</div>
<div class="a" style="left:1491.5px;top:359.8px;width:66px;height:18.5px;background:#fff;border:1.5px solid #3fb4e6;border-radius:3px"></div>
<div class="a" style="left:1558.3px;top:359.4px;width:28.5px;height:19.5px;background:#42b6e3;border-radius:4px;color:#fff;font-size:9px;line-height:19.5px;text-align:center">公式</div>
<div class="a" style="left:1447px;top:379.3px;width:143px;height:20.8px;background:#dbfbfd;border-bottom:1px solid #dfe9f1"></div>
<div class="a" style="left:1488px;top:379.3px;width:1px;height:20.8px;background:#dde6ee"></div>
<div class="t c" style="left:1447px;top:384.8px;width:41px;font-size:9px;color:#222">左延</div>
<div class="a" style="left:1491.5px;top:380.6px;width:66px;height:18.5px;background:#fff;border:1.5px solid #3fb4e6;border-radius:3px"></div>
<div class="a" style="left:1558.3px;top:380.2px;width:28.5px;height:19.5px;background:#42b6e3;border-radius:4px;color:#fff;font-size:9px;line-height:19.5px;text-align:center">公式</div>
<div class="a" style="left:1447px;top:400.1px;width:143px;height:20.8px;background:#f8f7f1;border-bottom:1px solid #dfe9f1"></div>
<div class="a" style="left:1488px;top:400.1px;width:1px;height:20.8px;background:#dde6ee"></div>
<div class="t c" style="left:1447px;top:405.6px;width:41px;font-size:9px;color:#222">右延</div>
<div class="a" style="left:1491.5px;top:401.4px;width:66px;height:18.5px;background:#fff;border:1.5px solid #3fb4e6;border-radius:3px"></div>
<div class="a" style="left:1558.3px;top:401.0px;width:28.5px;height:19.5px;background:#42b6e3;border-radius:4px;color:#fff;font-size:9px;line-height:19.5px;text-align:center">公式</div>
<div class="a" style="left:1447px;top:420.9px;width:143px;height:20.8px;background:#dbfbfd;border-bottom:1px solid #dfe9f1"></div>
<div class="a" style="left:1488px;top:420.9px;width:1px;height:20.8px;background:#dde6ee"></div>
<div class="t c" style="left:1447px;top:426.4px;width:41px;font-size:9px;color:#222">前后移动</div>
<div class="a" style="left:1491.5px;top:422.2px;width:66px;height:18.5px;background:#fff;border:1.5px solid #3fb4e6;border-radius:3px"></div>
<div class="a" style="left:1558.3px;top:421.8px;width:28.5px;height:19.5px;background:#42b6e3;border-radius:4px;color:#fff;font-size:9px;line-height:19.5px;text-align:center">公式</div>
<div class="a" style="left:1447px;top:441.7px;width:143px;height:20.8px;background:#f8f7f1;border-bottom:1px solid #dfe9f1"></div>
<div class="a" style="left:1488px;top:441.7px;width:1px;height:20.8px;background:#dde6ee"></div>
<div class="t c" style="left:1447px;top:447.2px;width:41px;font-size:9px;color:#222">左右移动</div>
<div class="a" style="left:1491.5px;top:443.0px;width:66px;height:18.5px;background:#fff;border:1.5px solid #3fb4e6;border-radius:3px"></div>
<div class="a" style="left:1558.3px;top:442.6px;width:28.5px;height:19.5px;background:#42b6e3;border-radius:4px;color:#fff;font-size:9px;line-height:19.5px;text-align:center">公式</div>
<div class="a" style="left:1447px;top:462.5px;width:143px;height:20.8px;background:#dbfbfd;border-bottom:1px solid #dfe9f1"></div>
<div class="a" style="left:1488px;top:462.5px;width:1px;height:20.8px;background:#dde6ee"></div>
<div class="t c" style="left:1447px;top:468.0px;width:41px;font-size:9px;color:#222">上下移动</div>
<div class="a" style="left:1491.5px;top:463.8px;width:66px;height:18.5px;background:#fff;border:1.5px solid #3fb4e6;border-radius:3px"></div>
<div class="a" style="left:1558.3px;top:463.4px;width:28.5px;height:19.5px;background:#42b6e3;border-radius:4px;color:#fff;font-size:9px;line-height:19.5px;text-align:center">公式</div>
<div class="a" style="left:1445.5px;top:489px;width:148px;height:10.5px;border:1px solid #e3e9ee;border-radius:4px;background:#f9f9f9"></div>
<div class="a" style="left:1446.5px;top:505px;width:70.5px;height:25px;background:#47b7e3;border-radius:6px;color:#fff;font-size:12px;line-height:25px;text-align:center">编辑属性</div>
<div class="a" style="left:1523.5px;top:505px;width:70.5px;height:25px;background:#47b7e3;border-radius:6px;color:#fff;font-size:12px;line-height:25px;text-align:center">自定义孔槽</div>
<div class="a" style="left:1451px;top:534.3px;width:28.6px;height:16.5px;border:1px solid #707070;border-radius:3px;background:linear-gradient(#f7f7f7,#d8d8d8);color:#111;font-size:9px;line-height:14.5px;text-align:center">清除</div>
<div class="a" style="left:1484.3px;top:534.3px;width:28.3px;height:16.5px;border:1px solid #cdcdcd;border-radius:3px;background:#f4f4f4;color:#b8b8b8;font-size:9px;line-height:14.5px;text-align:center">还原</div>
<div class="a" style="left:1527.5px;top:534.3px;width:29px;height:16.5px;border:1px solid #cdcdcd;border-radius:3px;background:#f4f4f4;color:#b8b8b8;font-size:9px;line-height:14.5px;text-align:center">复制</div>
<div class="a" style="left:1561px;top:534.3px;width:28.5px;height:16.5px;border:1px solid #cdcdcd;border-radius:3px;background:#f4f4f4;color:#b8b8b8;font-size:9px;line-height:14.5px;text-align:center">粘贴</div>
<div class="a" style="left:1448px;top:556px;width:67px;height:25px;background:#47b7e3;border-radius:6px;color:#fff;font-size:12px;line-height:25px;text-align:center">编辑形状</div>
<div class="a" style="left:1525px;top:556px;width:67px;height:25px;background:#47b7e3;border-radius:6px;color:#fff;font-size:12px;line-height:25px;text-align:center">恢复矩形</div>
<div class="a" style="left:1448.3px;top:585.4px;width:29.2px;height:16.5px;border:1px solid #cdcdcd;border-radius:3px;background:#f4f4f4;color:#b8b8b8;font-size:9px;line-height:14.5px;text-align:center">复制</div>
<div class="a" style="left:1482px;top:585.4px;width:28.6px;height:16.5px;border:1px solid #cdcdcd;border-radius:3px;background:#f4f4f4;color:#b8b8b8;font-size:9px;line-height:14.5px;text-align:center">粘贴</div>
<div class="a" style="left:1526.3px;top:585.4px;width:28.7px;height:16.5px;border:1px solid #707070;border-radius:3px;background:linear-gradient(#f7f7f7,#d8d8d8);color:#111;font-size:9px;line-height:14.5px;text-align:center">导出</div>
<div class="a" style="left:1444px;top:607px;width:71px;height:25px;background:#47b7e3;border-radius:6px;color:#fff;font-size:12px;line-height:25px;text-align:center">板件孔位</div>
<div class="a" style="left:1523.5px;top:607px;width:70.5px;height:25px;background:#47b7e3;border-radius:6px;color:#fff;font-size:12px;line-height:25px;text-align:center">圆弧板</div>
<div class="t" style="left:1448.5px;top:642.5px;font-size:9px;color:#222">搜索</div>
<div class="a" style="left:1477.5px;top:637.3px;width:71px;height:20.5px;background:#fff;border:1.5px solid #4cbae8;border-radius:3px"></div>
<div class="a" style="left:1549px;top:637.3px;width:41px;height:20.5px;background:#47b7e3;border-radius:5px;color:#fff;font-size:12px;line-height:20.5px;text-align:center">搜索</div>
<div class="t" style="left:1448.5px;top:670px;font-size:9px;color:#222">备注</div>
<div class="a" style="left:1479px;top:664.4px;width:110px;height:20.8px;background:#fff;border:1.5px solid #4cbae8;border-radius:3px"></div>
<div class="t" style="left:1483px;top:668.5px;font-size:10.8px;line-height:12px;color:#bdbdbd">板件备注信息</div>

</body></html>
